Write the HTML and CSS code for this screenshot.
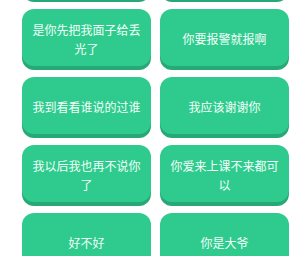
FILE: index.html
```
<html>
<link rel="stylesheet" href="styles.css">

<head>
    <title>语录</title>
</head>

<body>
    <div class="lista">
        <div class="cartao"></div>
        <div class="cartao"></div>
        <div class="cartao">是你先把我面子给丢光了</div>
        <div class="cartao">你要报警就报啊</div>
        <div class="cartao">我到看看谁说的过谁</div>
        <div class="cartao">我应该谢谢你</div>
        <div class="cartao">我以后我也再不说你了</div>
        <div class="cartao">你爱来上课不来都可以</div>
        <div class="cartao">好不好</div>
        <div class="cartao">你是大爷</div>
    </div>
</body>

</html>
```

FILE: styles.css
```
body {
    margin: 0;
    background-color: #ffffff;
    overflow: hidden;
}

.lista {
    display: grid;
    grid-template-columns: 129px 129px;
    column-gap: 9px;
    row-gap: 11px;
    padding-left: 22px;
    margin-top: -59px;
}

.cartao {
    height: 57px;
    padding: 2px 10px 0 10px;
    box-sizing: border-box;
    display: flex;
    align-items: center;
    justify-content: center;
    text-align: center;
    font-family: "Noto Sans CJK SC", sans-serif;
    font-size: 12px;
    line-height: 19px;
    color: #f2fff9;
    background-color: #2fcb8e;
    border-radius: 12px;
    box-shadow: 0 4px 0 #27a877;
}
```
